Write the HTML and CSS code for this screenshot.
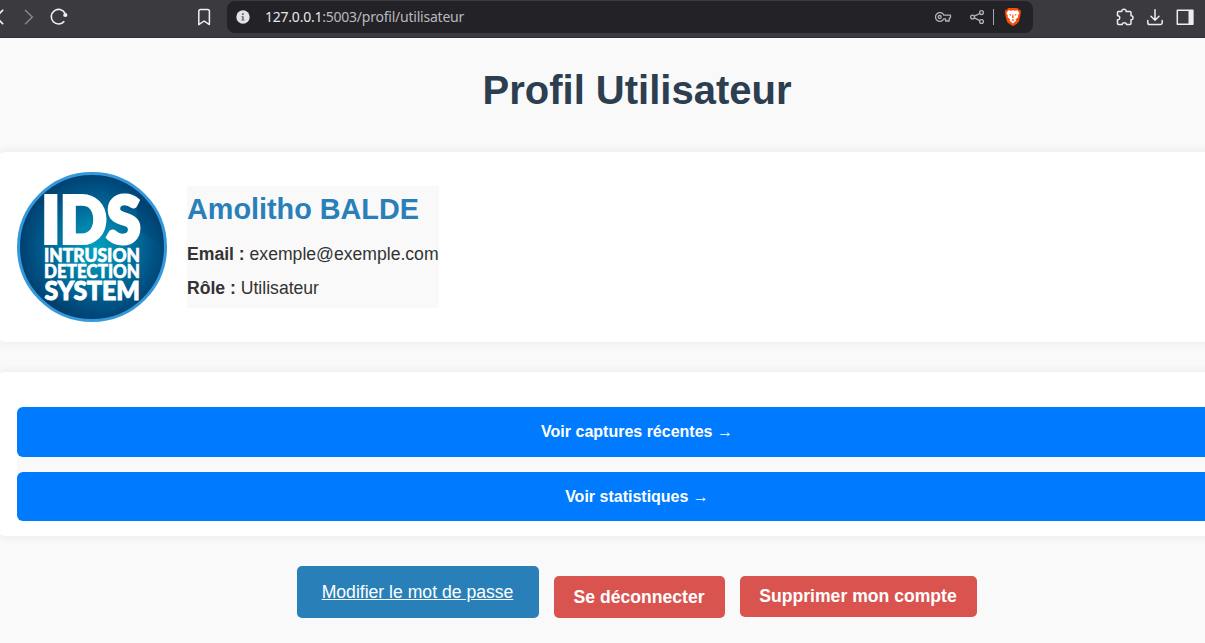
FILE: index.html
```html
<!DOCTYPE html>
<html lang="fr">
<head>
<meta charset="utf-8">
<title>Profil Utilisateur</title>
<link rel="stylesheet" href="styles.css">
</head>
<body>
<header class="toolbar">
  <svg class="nav-icons" width="227" height="37" viewBox="0 0 227 37" fill="none" stroke="#f2f2f4" stroke-width="1.6">
    <path d="M3.2 9.8-4 17l7.2 7.2"/>
    <path d="m25 10 7.3 7-7.3 7.2" stroke="#85858a"/>
    <path d="M64.3 21.2A7.3 7.3 0 1 1 65 13.2"/>
    <circle cx="65.3" cy="15" r="2.1" fill="#f2f2f4" stroke="none"/>
    <path d="M198.8 24.6V11.2a1.800 1.800 0 0 1 1.800-1.800h7a1.800 1.800 0 0 1 1.800 1.800v13.400l-5.300-3.600z" stroke-width="1.500" stroke-linejoin="round"/>
  </svg>
  <div class="address">
    <svg class="info" width="14" height="14" viewBox="0 0 14 14"><circle cx="7" cy="7" r="6.7" fill="#e2e2e7"/><path d="M6 3.2h1.800v1.700H6zM5.400 6.200h2.300v3.300h.8v1.100H5.400V9.500h.8V7.300h-.8z" fill="#65656c"/></svg>
    <span class="url"><span class="host">127.0.0.1</span>:5003/profil/utilisateur</span>
    <svg class="actions" width="98" height="32" viewBox="935 1 98 32" fill="none" stroke="#b4b4ba" stroke-width="1.3">
      <path d="M943.9 15.200A4.400 4.400 0 1 0 943.900 18.800H945.600V21h3.600v-2.300l1.300-1.400V15.200z" stroke-linejoin="round"/>
      <circle cx="939.7" cy="17" r="1.5"/>
      <circle cx="972.5" cy="17" r="1.9"/><circle cx="981.5" cy="12.6" r="1.9"/><circle cx="981.5" cy="21.5" r="1.9"/>
      <path d="m974.3 16.200 5.500-2.700M974.300 17.900l5.500 2.700"/>
      <path d="M993.500 9v16" stroke="#a6a6ac" stroke-width="1"/>
      <path d="M1008.300 8h9.200l1.500 1.700h1.200l.8 2.100-.5 1.500.2.900-1.700 6.800c-.5 2-3.600 3.800-6.100 5.100-2.500-1.300-5.600-3.100-6.100-5.100l-1.700-6.800.2-.9-.5-1.500.8-2.100h1.200z" fill="#fb4b08" stroke="none"/>
      <path d="m1008.500 10.300 2.600.5 1.800-.5 1.800.5 2.600-.5 2.100 2.800-1.500 2.600.3 1.200-2.600 2.500.8 1.100-3.500 3-3.500-3 .8-1.100-2.600-2.500.3-1.200-1.500-2.600z" fill="#fff" stroke="none"/>
      <path d="m1008.800 13.900 2.300.5-.2 1.500zM1017 13.900l-2.300.5.2 1.500zM1012.500 14.500h.8l.4 3.300-.8.500-.8-.5zM1011.300 19.900l1.600-.6 1.600.6-1.600 1z" fill="#fb4b08" stroke="none"/>
    </svg>
  </div>
  <svg class="ext-icons" width="90" height="37" viewBox="1115 0 90 37" fill="none" stroke="#ededf0" stroke-width="1.5" stroke-linejoin="round" stroke-linecap="round">
    <path d="M1118.500 11.500h3.300c-.5-3 4.800-3 4.300 0h3.900a1 1 0 0 1 1 1v3.300c2.700-.3 2.700 4.200 0 3.900v3.800a1 1 0 0 1-1 1h-3.600c.2-2.500-4.300-2.500-4.100 0h-3.800a1 1 0 0 1-1-1v-3.800c3 .3 3-4.200 0-3.900v-3.300a1 1 0 0 1 1-1z"/>
    <path d="M1155 9.800v10.400m-4-3.900 4 3.900 4-3.900M1147.800 20.500v2.200a1.800 1.800 0 0 0 1.800 1.800h10.800a1.800 1.800 0 0 0 1.800-1.800v-2.200"/>
    <rect x="1177.300" y="10.200" width="15.500" height="14"/><path d="M1188.500 10h4.700v14.500h-4.700z" fill="#ededf0" stroke="none"/>
  </svg>
</header>
<div class="viewport">
  <main class="page">
    <h1 class="title">Profil Utilisateur</h1>
    <section class="card profile">
      <svg class="avatar" width="150" height="150" viewBox="0 0 150 150">
        <defs>
          <radialGradient id="glow" cx=".52" cy=".51" r=".53"><stop offset="0" stop-color="#02a3bf"/><stop offset=".4" stop-color="#017ba5"/><stop offset=".75" stop-color="#005486"/><stop offset="1" stop-color="#003e6e"/></radialGradient>
          <linearGradient id="shade" x1="0" y1="0" x2="1" y2="1"><stop offset="0" stop-color="#00264d" stop-opacity=".6"/><stop offset=".7" stop-color="#00264d" stop-opacity="0"/></linearGradient>
          <clipPath id="disc"><circle cx="75" cy="75" r="72.500"/></clipPath>
        </defs>
        <circle cx="75" cy="75" r="73" fill="url(#glow)"/>
        <g clip-path="url(#disc)"><path d="m119 24 40 26v32l-38-24zM28 128l95-5 30 22v12H60z" fill="url(#shade)"/></g>
        <circle cx="75" cy="75" r="73.500" fill="none" stroke="#3498db" stroke-width="3"/>
        <g class="logo-text">
          <text class="logo-big" x="24.500" y="70.500" textLength="99" lengthAdjust="spacingAndGlyphs">IDS</text>
          <text class="logo-line" x="27" y="89.700" textLength="96" lengthAdjust="spacingAndGlyphs">INTRUSION</text>
          <text class="logo-line" x="27" y="106.200" textLength="96" lengthAdjust="spacingAndGlyphs">DETECTION</text>
          <text class="logo-last" x="27.500" y="128" textLength="95.500" lengthAdjust="spacingAndGlyphs">SYSTEM</text>
        </g>
      </svg>
      <div class="details">
        <h2 class="name">Amolitho BALDE</h2>
        <p class="field"><strong>Email :</strong> exemple@exemple.com</p>
        <p class="field"><strong>Rôle :</strong> Utilisateur</p>
      </div>
    </section>
    <section class="card links">
      <div class="link-list">
        <a class="link">Voir captures récentes →</a>
        <a class="link link-short">Voir statistiques →</a>
      </div>
    </section>
    <div class="buttons">
      <a class="btn btn-edit">Modifier le mot de passe</a>
      <a class="btn btn-logout">Se déconnecter</a>
      <a class="btn btn-delete">Supprimer mon compte</a>
    </div>
  </main>
</div>
</body>
</html>
```

FILE: styles.css
```css
* { box-sizing: border-box; }
body {
  margin: 0;
  height: 643px;
  overflow: hidden;
  background: #f9f9f9;
  color: #333;
  font-family: "Liberation Sans", Arial, sans-serif;
}
.toolbar {
  display: flex;
  height: 38px;
  background: #3b3a3f;
  border-bottom: 1px solid #302f34;
}
.nav-icons, .ext-icons { flex: none; }
.ext-icons { margin-left: 82px; }
.address {
  display: flex;
  align-items: center;
  width: 806px;
  height: 32px;
  margin-top: 1px;
  padding-left: 9px;
  border-radius: 8px;
  background: #232227;
}
.url {
  margin-left: 15px;
  color: #b9b9bf;
  font: 14px/20px "Noto Sans", sans-serif;
  letter-spacing: -0.23px;
  white-space: nowrap;
}
.host { color: #e6e6e9; }
.actions { margin-left: auto; }
.viewport { height: 605px; overflow: hidden; }
.page { width: 1280px; margin-left: -3px; }
.title {
  margin: 0;
  padding: 29px 0 39px;
  color: #2c3e50;
  font-size: 40px;
  line-height: 46px;
  text-align: center;
}
.card {
  padding: 20px;
  border-radius: 8px;
  background: #fff;
  box-shadow: 0 0 10px rgba(0, 0, 0, 0.07);
}
.profile {
  display: flex;
  align-items: center;
  gap: 20px;
  height: 190px;
}
.logo-text { fill: #fff; stroke: #fff; font-family: Lato, sans-serif; font-weight: 900; }
.logo-big { font-size: 65px; stroke-width: 4px; }
.logo-line { font-size: 18px; stroke-width: 0.6px; }
.logo-last { font-size: 26px; stroke-width: 1px; }
.details { height: 122px; background: #f9f9f9; }
.name {
  margin: 0 0 18px;
  padding-top: 6px;
  color: #2980b9;
  font-size: 28.8px;
  line-height: 34px;
}
.field { margin: 0 0 14px; font-size: 17.6px; line-height: 20px; }
.links { height: 164px; margin-top: 30px; padding-top: 35px; }
.link-list {
  display: flex;
  flex-direction: column;
  gap: 15px;
  background: #f9f9f9;
}
.link {
  height: 50px;
  border-radius: 6px;
  background: #007bff;
  color: #fff;
  font-size: 16px;
  font-weight: 700;
  line-height: 50px;
  text-align: center;
}
.link-short { height: 49px; line-height: 49px; }
.buttons {
  display: flex;
  justify-content: center;
  align-items: flex-start;
  gap: 15px;
  padding-top: 30px;
}
.btn {
  padding-right: 1px;
  border-radius: 5px;
  color: #fff;
  font-size: 17.6px;
  text-align: center;
  white-space: nowrap;
}
.btn-edit { width: 242px; height: 52px; background: #2980b9; line-height: 52px; text-decoration: underline; }
.btn-logout, .btn-delete { margin-top: 10px; background: #d9534f; font-weight: 700; }
.btn-logout { width: 171px; height: 42px; line-height: 42px; }
.btn-delete { width: 237px; height: 41px; line-height: 41px; }
```
